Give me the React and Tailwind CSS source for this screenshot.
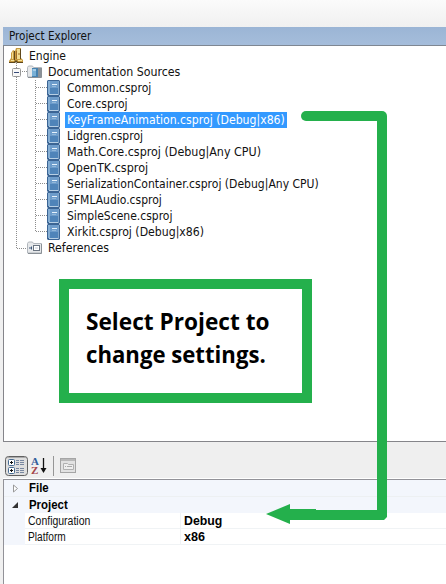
import { useLayoutEffect, useRef, useState } from "react";

function FitText({ width, className = "", children }) {
  const ref = useRef(null);
  const [scale, setScale] = useState(1);
  useLayoutEffect(() => {
    setScale(width / ref.current.offsetWidth);
  }, [width]);
  return (
    <span
      ref={ref}
      className={`inline-block origin-left whitespace-pre ${className}`}
      style={{ transform: `scaleX(${scale})` }}
    >
      {children}
    </span>
  );
}

const projects = [
  ["Common.csproj", 84],
  ["Core.csproj", 61],
  ["KeyFrameAnimation.csproj (Debug|x86)", 218],
  ["Lidgren.csproj", 76],
  ["Math.Core.csproj (Debug|Any CPU)", 194],
  ["OpenTK.csproj", 81],
  ["SerializationContainer.csproj (Debug|Any CPU)", 252],
  ["SFMLAudio.csproj", 95],
  ["SimpleScene.csproj", 105],
  ["Xirkit.csproj (Debug|x86)", 137],
];

function EngineIcon() {
  return (
    <svg width="16" height="16" viewBox="0 0 16 16" className="shrink-0">
      <path d="M2 5 4 2l2 1 1-3h5v10l2 2v3H9l-2-2-1 2H0v-2l2-3z" fill="#c79a3f" />
      <path d="M3 5 4 3v8H3zM8 1h3v10H8z" fill="#f2dc90" />
      <path d="M5 3h1v9H5zM11 1h1v10h-1zM0 14h5l2-2 2 2h5v1H8l-1-1-1 1H0z" fill="#5f481d" />
      <path d="M7.5 3v8M9 6h2" stroke="#a26b25" fill="none" />
      <path d="M2 12.5h3M9 12.5h4" stroke="#f6e39d" />
    </svg>
  );
}

function FolderIcon({ reference }) {
  return (
    <svg width="15" height="14" viewBox="0 0 15 14" className="shrink-0">
      <path d="M.5 2.5 1.5 1h4l1 1.5h8v9.5H.5z" fill="#e6e8ea" stroke="#b1b6bc" />
      <path d="M1 12.5h13.5V3" stroke="#8a9096" fill="none" />
      {reference ? (
        <>
          <rect x="6.5" y="4.5" width="6" height="5" fill="#fff" stroke="#6b7582" />
          <path d="M2 7h2M4.5 5.5v3" stroke="#405a7c" />
          <path d="M8 7h3" stroke="#c4ccd6" />
        </>
      ) : (
        <>
          <path d="M5 3h6v9H5z" fill="#4782af" />
          <path d="M5 4h4v7H5z" fill="#79b0d6" />
          <path d="M11 3h3v9h-3z" fill="#8a9299" />
          <path d="M6 5h3" stroke="#d7ecf8" />
        </>
      )}
    </svg>
  );
}

function ProjectIcon() {
  return (
    <svg width="13" height="16" viewBox="0 0 13 16" className="shrink-0">
      <path d="M1 0h11l1 1v14l-1 1H1l-1-1V1z" fill="#3b6595" />
      <path d="M1 1h2v13H1z" fill="#86aed3" />
      <path d="M3 1h8v13H3z" fill="#6d9ccb" />
      <path d="M3 8h8v6H3z" fill="#4f84b9" />
      <path d="M11 1h1v14h-1z" fill="#7fa4c8" />
      <path d="M5 4.5h5" stroke="#e5f1fb" />
      <path d="M5 6.5h4" stroke="#92b8da" />
      <path d="M2 14.5h9" stroke="#b7cfe4" />
    </svg>
  );
}

function Tree() {
  return (
    <div className="relative h-[396px] border-b border-l border-[#85858a] bg-white pt-[2px] font-['DejaVu_Sans_Condensed','DejaVu_Sans',sans-serif] text-[12px] leading-4 text-[#111]">
      <svg width="60" height="220" className="absolute left-0 top-0" fill="none" stroke="#8d8d8d" strokeDasharray="1 1">
        <path d="M12.5 17v185M13 202.5h10M18 25.5h5M31.5 34v152" />
        {projects.map(([name], i) => (
          <path key={name} d={`M32 ${41.5 + i * 16}h11`} />
        ))}
      </svg>
      <div className="flex h-4 items-center pl-[5px]">
        <EngineIcon />
        <FitText width={37} className="ml-[4px]">Engine</FitText>
      </div>
      <div className="relative flex h-4 items-center pl-[8px]">
        <svg width="9" height="9" className="shrink-0">
          <rect x=".5" y=".5" width="8" height="8" rx="1" fill="#f8f8f8" stroke="#969696" />
          <path d="M2 4.5h5" stroke="#374b78" />
        </svg>
        <span className="ml-[6px] flex"><FolderIcon /></span>
        <FitText width={132} className="ml-[6px]">Documentation Sources</FitText>
      </div>
      {projects.map(([name, width], i) => (
        <div key={name} className="relative flex h-4 items-center pl-[43px]">
          <ProjectIcon />
          {i === 2 ? (
            <div className="ml-[5px] h-4 w-[222px] bg-[#3399ff] pl-[2px] text-white">
              <FitText width={width}>{name}</FitText>
            </div>
          ) : (
            <FitText width={width} className="ml-[7px]">{name}</FitText>
          )}
        </div>
      ))}
      <div className="relative flex h-4 items-center pl-[23px]">
        <FolderIcon reference />
        <FitText width={61} className="ml-[6px]">References</FitText>
      </div>
    </div>
  );
}

function Toolbar() {
  return (
    <div className="flex h-[37px] items-start border-b border-white bg-[#efefef] pl-px pt-[12px]">
      <svg width="26" height="24" fill="none">
        <rect x="1.5" y="2.5" width="22" height="19" rx="3" fill="#dedede" stroke="#606060" />
        <path d="M3 3.5h19" stroke="#aaa" />
        {[5, 13].map((y) => (
          <g key={y}>
            <rect x="4.5" y={y + 0.5} width="6" height="6" rx="1" fill="#fff" stroke="#476b91" />
            <path d={`M6 ${y + 3.5}h3M7.5 ${y + 2}v3`} stroke="#111" />
            <path d={`M12 ${y + 1.5}h3m1 0h4M12 ${y + 3.5}h3m1 0h4M12 ${y + 5.5}h3m1 0h4`} stroke="#7887a0" />
          </g>
        ))}
      </svg>
      <div className="ml-px flex w-[8px] flex-col pt-[3px] font-['Liberation_Serif',serif] text-[11px] font-bold leading-[9px]">
        <span className="h-[9px] text-[#315d9a]">A</span>
        <span className="h-[9px] text-[#a44448]">Z</span>
      </div>
      <svg width="44" height="24" fill="none">
        <path d="M4.5 4v13" stroke="#111" strokeWidth="1.3" />
        <path d="M1.5 14h6l-3 5z" fill="#111" />
        <path d="M14.5 2v20" stroke="#969696" />
        <rect x="21.5" y="4.5" width="15" height="14" fill="#e2e2e2" stroke="#a5a5a5" />
        <path d="M22 6h14" stroke="#b8b8b8" strokeWidth="2" />
        <path d="M24.5 15.5v-6h4l1 1h5v5z" fill="#eee" stroke="#b0b0b0" />
        <path d="M26 12.5h1m1 0h5" stroke="#aaa" />
      </svg>
    </div>
  );
}

function PropertyGrid() {
  return (
    <div className="h-[105px] border-l border-t border-[#929298] bg-white font-['Liberation_Sans',Arial,sans-serif] text-[12px] leading-4 text-[#111]">
      <div className="flex h-[17px] items-center border-b border-[#edf0f2] bg-[#f3f6fc] pl-[8px] font-bold">
        <svg width="7" height="9"><path d="M1.5 1 5.5 4.5l-4 3.5z" fill="#fff" stroke="#999" /></svg>
        <FitText width={20} className="ml-[10px] text-black">File</FitText>
      </div>
      <div className="flex h-4 items-center bg-[#f3f6fc] pl-[8px] font-bold">
        <svg width="7" height="8"><path d="M6 1v6H0z" fill="#333" /></svg>
        <FitText width={39} className="ml-[10px] text-black">Project</FitText>
      </div>
      {[
        ["Configuration", 62, "Debug", 38],
        ["Platform", 38, "x86", 21],
      ].map(([name, nameWidth, value, valueWidth]) => (
        <div key={name} className="flex h-4">
          <div className="w-[21px] bg-[#f3f6fc]" />
          <div className="w-[156px] border-b border-r border-[#f0f3f5] pl-[3px]">
            <FitText width={nameWidth}>{name}</FitText>
          </div>
          <div className="flex-1 border-b border-[#f0f3f5] pl-[3px] font-bold text-black">
            <FitText width={valueWidth}>{value}</FitText>
          </div>
        </div>
      ))}
    </div>
  );
}

export default function App() {
  return (
    <div className="relative flex h-[584px] w-[446px] flex-col overflow-hidden bg-[#f0f0f0]">
      <div className="h-[27px] bg-linear-to-b from-[#fbfbfb] to-[#f0f0f0]" />
      <div className="ml-[3px] flex flex-col">
        <div className="h-[19px] border-b border-[#7f8792] bg-linear-to-b from-[#9bb5d5] to-[#a5bddb] pl-[6px] font-['DejaVu_Sans_Condensed','DejaVu_Sans',sans-serif] text-[12px] leading-[19px] text-[#111]">
          <FitText width={82}>Project Explorer</FitText>
        </div>
        <Tree />
        <Toolbar />
        <PropertyGrid />
      </div>
      <div className="absolute left-[59px] top-[279px] h-[124px] w-[253px] border-[10px] border-[#24b04c] bg-white pl-[17px] pt-[15px] font-['Open_Sans',sans-serif] text-[24px] font-bold leading-[33px] text-black">
        <FitText width={184}>Select Project to</FitText>
        <FitText width={180}>change settings.</FitText>
      </div>
      <svg width="446" height="584" className="pointer-events-none absolute left-0 top-0">
        <path d="M306 116h76" stroke="#24b04c" strokeWidth="10" strokeLinecap="round" fill="none" />
        <path d="M377 116h10v401l-3 3h-94v4l-24-10 24-10v5h26v1h61z" fill="#24b04c" />
      </svg>
    </div>
  );
}
